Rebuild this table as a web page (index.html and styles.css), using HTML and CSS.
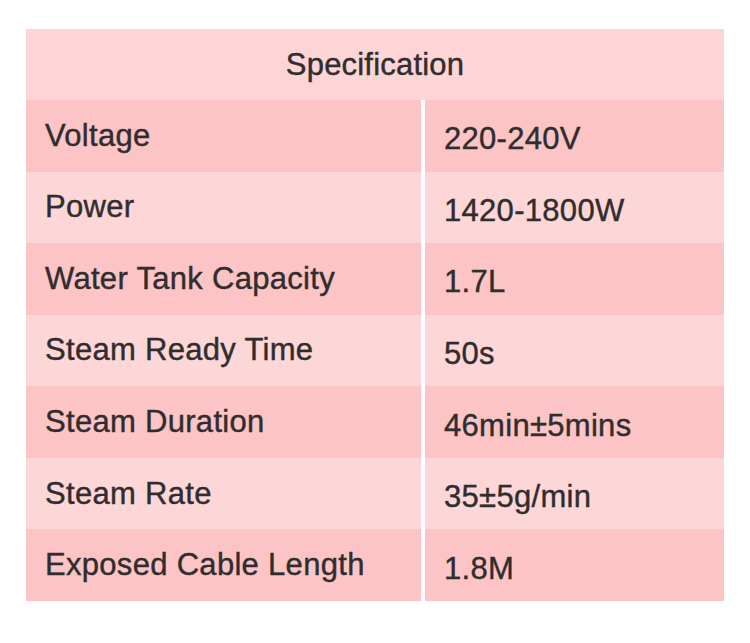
FILE: index.html
```html
<!DOCTYPE html>
<html>
<head>
<meta charset="utf-8">
<link rel="stylesheet" href="styles.css">
</head>
<body>
<div class="spec">
  <div class="head">Specification</div>
  <div class="cell key dark">Voltage</div><div class="cell val dark">220-240V</div>
  <div class="cell key light">Power</div><div class="cell val light">1420-1800W</div>
  <div class="cell key dark">Water Tank Capacity</div><div class="cell val dark">1.7L</div>
  <div class="cell key light">Steam Ready Time</div><div class="cell val light">50s</div>
  <div class="cell key dark">Steam Duration</div><div class="cell val dark">46min±5mins</div>
  <div class="cell key light">Steam Rate</div><div class="cell val light">35±5g/min</div>
  <div class="cell key dark">Exposed Cable Length</div><div class="cell val dark">1.8M</div>
</div>
</body>
</html>
```
FILE: styles.css
```css
html, body {
  margin: 0;
  padding: 0;
  background: #ffffff;
}
body {
  padding: 29px 0 0 26px;
  font-family: "Liberation Sans", Arial, sans-serif;
  color: #2f2d2d;
}
.spec {
  display: grid;
  grid-template-columns: 395px 299px;
  column-gap: 4px;
  grid-template-rows: 71px;
  grid-auto-rows: 71.57px;
  width: 698px;
}
.head {
  grid-column: 1 / 3;
  background: #fdd5d6;
  display: flex;
  align-items: center;
  justify-content: center;
  font-size: 31px;
  letter-spacing: 0.2px;
  -webkit-text-stroke: 0.4px #2f2d2d;
}
.cell {
  display: flex;
  align-items: center;
  font-size: 31px;
  letter-spacing: 0.3px;
  -webkit-text-stroke: 0.4px #2f2d2d;
  box-sizing: border-box;
}
.key {
  padding-left: 19px;
}
.val {
  padding-left: 19px;
  padding-top: 7px;
}
.dark {
  background: #fcc4c5;
}
.light {
  background: #fdd6d7;
}
```
